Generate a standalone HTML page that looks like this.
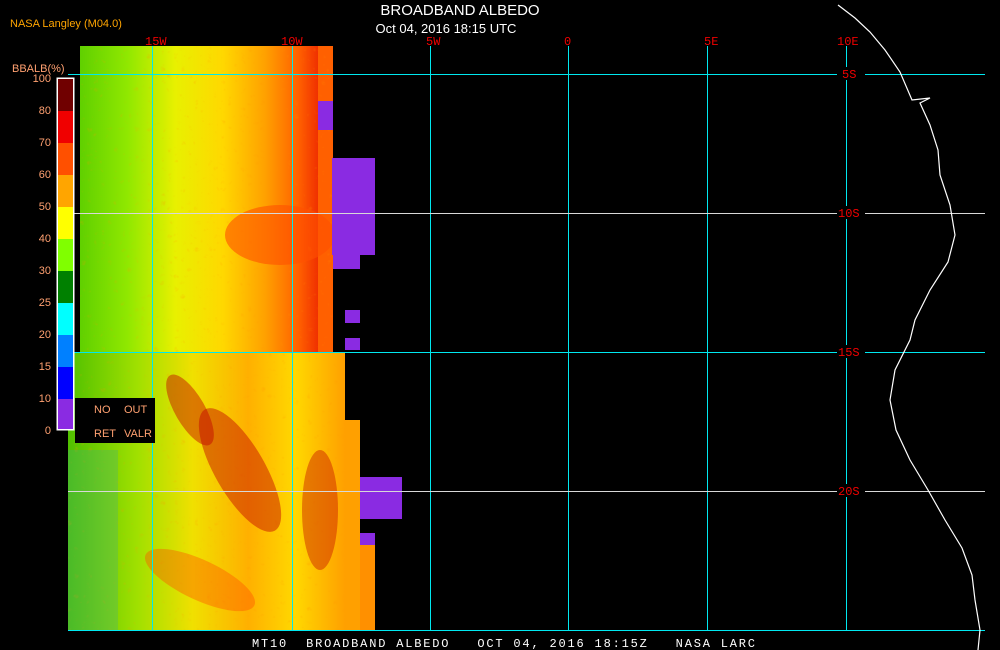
<!DOCTYPE html><html><head><style>body{margin:0;background:#000;width:1000px;height:650px;overflow:hidden;font-family:"Liberation Sans",sans-serif}</style></head><body>
<svg width="1000" height="650" xmlns="http://www.w3.org/2000/svg" style="position:absolute;left:0;top:0">
<defs>
<linearGradient id="g" x1="0" x2="1" y1="0" y2="0">
<stop offset="0" stop-color="#60d000"/><stop offset="0.2" stop-color="#90e800"/><stop offset="0.4" stop-color="#e8f000"/><stop offset="0.6" stop-color="#ffd800"/><stop offset="0.78" stop-color="#ffa000"/><stop offset="0.92" stop-color="#ff6000"/><stop offset="1" stop-color="#f03000"/></linearGradient>
<linearGradient id="g2" x1="0" x2="1" y1="0" y2="0">
<stop offset="0" stop-color="#50c000"/><stop offset="0.25" stop-color="#a0e000"/><stop offset="0.45" stop-color="#f0e000"/><stop offset="0.65" stop-color="#ffb000"/><stop offset="0.82" stop-color="#ffd800"/><stop offset="1" stop-color="#ffa000"/></linearGradient>
<filter id="n" x="0" y="0" width="1" height="1"><feTurbulence baseFrequency="0.15" numOctaves="2" seed="3"/><feColorMatrix values="0 0 0 0 1  0 0 0 0 0.3  0 0 0 0 0  0 0 0 1.2 -0.55"/><feComposite in2="SourceGraphic" operator="in"/></filter>
</defs>
<rect x="80" y="46" width="238" height="310" fill="url(#g)"/>
<rect x="318" y="46" width="15" height="310" fill="#ff6000"/>
<rect x="68" y="352" width="277" height="278" fill="url(#g2)"/>
<rect x="345" y="420" width="15" height="210" fill="#ffa000"/>
<rect x="360" y="545" width="15" height="85" fill="#ff9000"/>
<rect x="80" y="46" width="253" height="306" fill="#ff4000" filter="url(#n)" opacity="0.5"/>
<rect x="68" y="352" width="277" height="278" fill="#ff4000" filter="url(#n)" opacity="0.5"/>
<ellipse cx="280" cy="235" rx="55" ry="30" fill="#ff5000" opacity="0.6"/>
<ellipse cx="240" cy="470" rx="25" ry="70" fill="#c00000" opacity="0.45" transform="rotate(-30 240 470)"/>
<ellipse cx="190" cy="410" rx="15" ry="40" fill="#c00000" opacity="0.45" transform="rotate(-30 190 410)"/>
<ellipse cx="320" cy="510" rx="18" ry="60" fill="#c00000" opacity="0.4"/>
<ellipse cx="200" cy="580" rx="60" ry="20" fill="#ff5000" opacity="0.4" transform="rotate(25 200 580)"/>
<rect x="68" y="450" width="50" height="180" fill="#40b080" opacity="0.3"/>
<g fill="#8a2be2"><rect x="318" y="101" width="15" height="29"/><rect x="332" y="158" width="43" height="97"/><rect x="333" y="255" width="27" height="14"/><rect x="345" y="310" width="15" height="13"/><rect x="345" y="338" width="15" height="12"/><rect x="360" y="477" width="42" height="42"/><rect x="360" y="533" width="15" height="12"/></g>
<g stroke="#00e8f0" stroke-width="1"><line x1="152.5" y1="46" x2="152.5" y2="630"/><line x1="292.5" y1="46" x2="292.5" y2="630"/><line x1="430.5" y1="46" x2="430.5" y2="630"/><line x1="568.5" y1="46" x2="568.5" y2="630"/><line x1="707.5" y1="46" x2="707.5" y2="630"/><line x1="846.5" y1="46" x2="846.5" y2="630"/>
<line x1="68" y1="74.5" x2="985" y2="74.5"/><line x1="68" y1="352.5" x2="985" y2="352.5"/><line x1="68" y1="630.5" x2="985" y2="630.5"/></g>
<g stroke="#d8d8d8"><line x1="68" y1="213.5" x2="985" y2="213.5"/><line x1="68" y1="491.5" x2="985" y2="491.5"/></g>
<polyline fill="none" stroke="#fff" stroke-width="1.2" points="838,5 855,18 870,32 885,50 900,72 912,100 930,98 920,103 930,125 938,150 940,175 950,205 955,235 948,262 930,290 915,320 910,340 895,370 890,400 896,430 910,460 928,490 945,520 962,548 972,575 975,600 980,630 978,650"/>
<rect x="56.5" y="77.5" width="18" height="353" fill="#fff"/>
<g><rect x="58" y="79" width="15" height="32" fill="#700000"/><rect x="58" y="111" width="15" height="32" fill="#f00000"/><rect x="58" y="143" width="15" height="32" fill="#ff5000"/><rect x="58" y="175" width="15" height="32" fill="#ffa500"/><rect x="58" y="207" width="15" height="32" fill="#ffff00"/><rect x="58" y="239" width="15" height="32" fill="#80ff00"/><rect x="58" y="271" width="15" height="32" fill="#008000"/><rect x="58" y="303" width="15" height="32" fill="#00ffff"/><rect x="58" y="335" width="15" height="32" fill="#0080ff"/><rect x="58" y="367" width="15" height="32" fill="#0000ff"/><rect x="58" y="399" width="15" height="30" fill="#8a2be2"/></g>
<rect x="75" y="398" width="80" height="45" fill="#000"/>
<g fill="#ffa070" font-size="11"><text x="94" y="413">NO</text><text x="124" y="413">OUT</text><text x="94" y="437">RET</text><text x="124" y="437">VALR</text>
<text x="12" y="72">BBALB(%)</text>
<g text-anchor="end"><text x="51" y="82">100</text><text x="51" y="114">80</text><text x="51" y="146">70</text><text x="51" y="178">60</text><text x="51" y="210">50</text><text x="51" y="242">40</text><text x="51" y="274">30</text><text x="51" y="306">25</text><text x="51" y="338">20</text><text x="51" y="370">15</text><text x="51" y="402">10</text><text x="51" y="434">0</text></g></g>
<text x="10" y="27" fill="#ffa500" font-size="11">NASA Langley (M04.0)</text>
<text x="460" y="15" fill="#fff" font-size="15" text-anchor="middle">BROADBAND ALBEDO</text>
<text x="446" y="33" fill="#fff" font-size="13" text-anchor="middle">Oct 04, 2016 18:15 UTC</text>
<g fill="#000"><rect x="837" y="67" width="28" height="13"/><rect x="837" y="206" width="28" height="13"/><rect x="837" y="345" width="28" height="13"/><rect x="837" y="484" width="28" height="13"/></g>
<g fill="#f00000" font-size="12" font-family="Liberation Mono,monospace"><text x="145" y="45">15W</text><text x="281" y="45">10W</text><text x="426" y="45">5W</text><text x="564" y="45">0</text><text x="704" y="45">5E</text><text x="837" y="45">10E</text>
<text x="842" y="78">5S</text><text x="838" y="217">10S</text><text x="838" y="356">15S</text><text x="838" y="495">20S</text></g>
<text x="252" y="647" fill="#fff" font-size="12" font-family="Liberation Mono,monospace" textLength="503" xml:space="preserve">MT10  BROADBAND ALBEDO   OCT 04, 2016 18:15Z   NASA LARC</text>
</svg></body></html>
